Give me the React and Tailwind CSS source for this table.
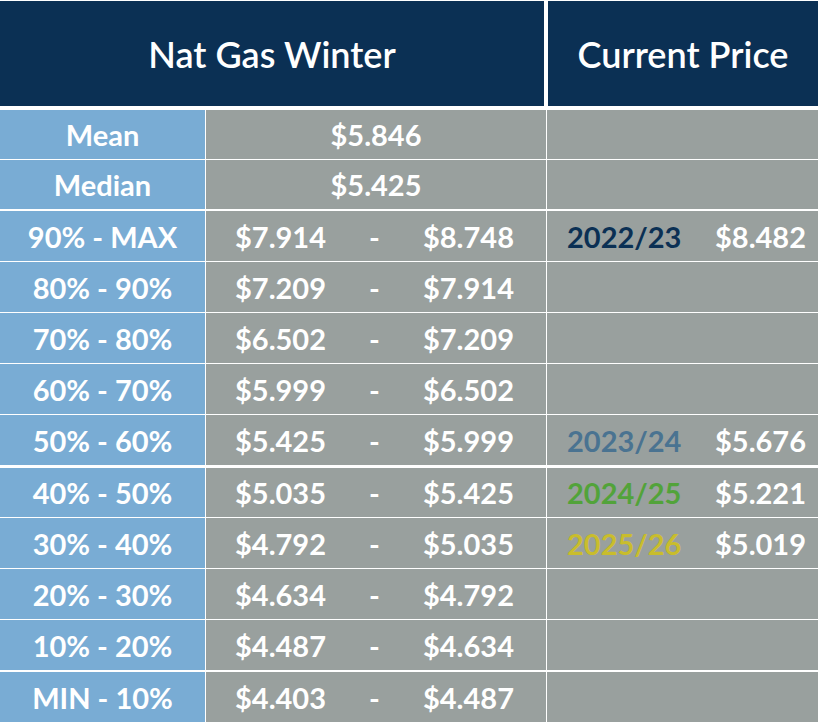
const NAVY = 'bg-[#0b3054]'

const ranges = [
  { label: '90% - MAX', lo: '$7.914', hi: '$8.748', h: 'h-[50px]', gap: 'mb-px', year: '2022/23', yc: 'text-[#0b3054]', price: '$8.482' },
  { label: '80% - 90%', lo: '$7.209', hi: '$7.914', h: 'h-[50px]', gap: 'mb-px' },
  { label: '70% - 80%', lo: '$6.502', hi: '$7.209', h: 'h-[50px]', gap: 'mb-px' },
  { label: '60% - 70%', lo: '$5.999', hi: '$6.502', h: 'h-[50px]', gap: 'mb-px' },
  { label: '50% - 60%', lo: '$5.425', hi: '$5.999', h: 'h-[50px]', gap: 'mb-[3px]', year: '2023/24', yc: 'text-[#4a7391]', price: '$5.676' },
  { label: '40% - 50%', lo: '$5.035', hi: '$5.425', h: 'h-[49px]', gap: 'mb-px', year: '2024/25', yc: 'text-[#52a33a]', price: '$5.221' },
  { label: '30% - 40%', lo: '$4.792', hi: '$5.035', h: 'h-[50px]', gap: 'mb-px', year: '2025/26', yc: 'text-[#c9bd2c]', price: '$5.019' },
  { label: '20% - 30%', lo: '$4.634', hi: '$4.792', h: 'h-[50px]', gap: 'mb-px' },
  { label: '10% - 20%', lo: '$4.487', hi: '$4.634', h: 'h-[50px]', gap: 'mb-[2px]' },
  { label: 'MIN - 10%', lo: '$4.403', hi: '$4.487', h: 'h-[50px]', gap: '' },
]

function Row({ h, gap, label, children, right }) {
  return (
    <div className={`flex gap-px ${h} ${gap}`}>
      <div className="w-[205px] bg-[#79acd4] flex items-center justify-center">{label}</div>
      <div className="w-[340px] bg-[#99a09e] flex items-center">{children}</div>
      <div className="w-[271px] bg-[#99a09e] flex items-center">{right}</div>
    </div>
  )
}

export default function App() {
  return (
    <div className="w-[820px] h-[724px] bg-white pt-px text-white font-bold text-[29px] leading-none" style={{ fontFamily: 'Lato, "Open Sans", sans-serif' }}>
      <div className="flex gap-1 h-[105px] mb-1">
        <div className={`w-[544px] ${NAVY} flex items-center justify-center text-[36px] font-semibold`}>Nat Gas Winter</div>
        <div className={`w-[270px] ${NAVY} flex items-center justify-center text-[36px] font-semibold`}>Current Price</div>
      </div>

      <Row h="h-[49px]" gap="mb-px" label="Mean">
        <span className="w-full text-center">$5.846</span>
      </Row>
      <Row h="h-[49px]" gap="mb-[2px]" label="Median">
        <span className="w-full text-center">$5.425</span>
      </Row>

      {ranges.map(r => (
        <Row key={r.label} h={r.h} gap={r.gap} label={r.label}
          right={r.year && (
            <div className="w-full flex justify-between pl-[20px] pr-[12px]">
              <span className={r.yc}>{r.year}</span>
              <span>{r.price}</span>
            </div>
          )}>
          <div className="w-full flex justify-between items-center pl-[29px] pr-[32px]">
            <span>{r.lo}</span>
            <span>-</span>
            <span>{r.hi}</span>
          </div>
        </Row>
      ))}
    </div>
  )
}
